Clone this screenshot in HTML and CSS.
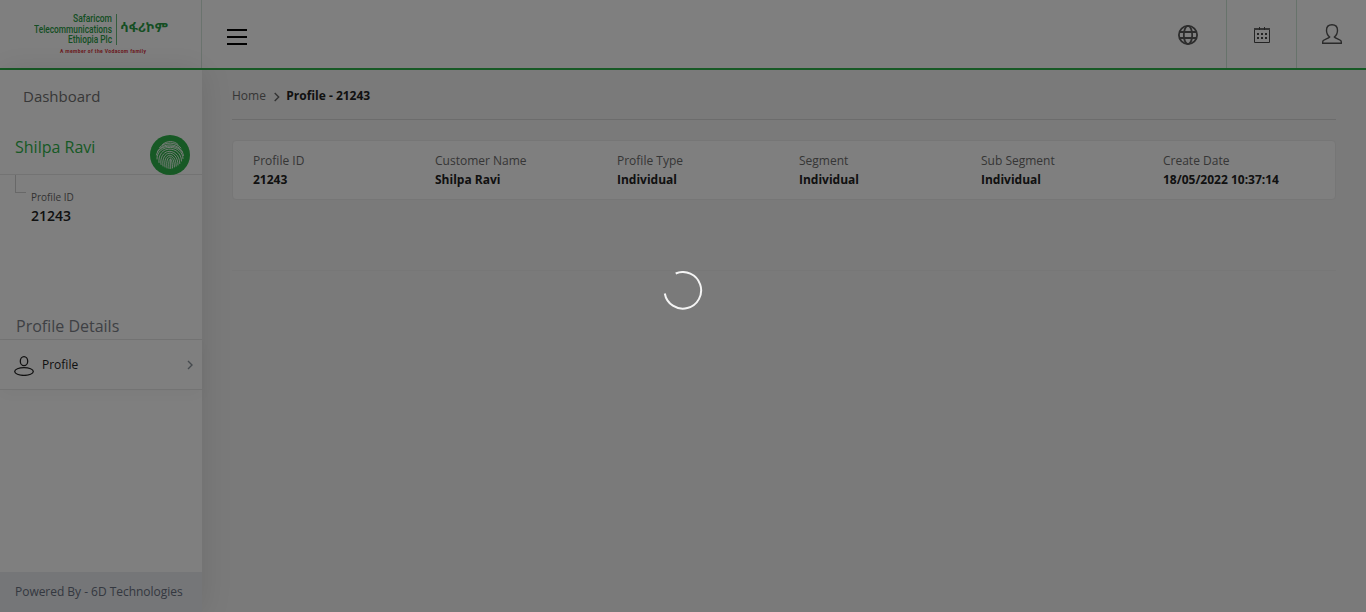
FILE: index.html
```html
<!DOCTYPE html>
<html lang="en">
<head>
<meta charset="utf-8">
<title>Profile - 21243</title>
<link rel="stylesheet" href="styles.css">
</head>
<body>
<header class="topbar">
  <div class="brand">
    <svg class="logo" width="140" height="46" viewBox="0 0 140 46">
      <g class="logo-name">
        <text x="39" y="13.200" textLength="39" lengthAdjust="spacingAndGlyphs">Safaricom</text>
        <text x="0" y="23.700" textLength="78" lengthAdjust="spacingAndGlyphs">Telecommunications</text>
        <text x="34" y="34.200" textLength="44" lengthAdjust="spacingAndGlyphs">Ethiopia Plc</text>
      </g>
      <text class="logo-amharic" x="86" y="22.500" textLength="48" lengthAdjust="spacingAndGlyphs">ሳፋሪኮም</text>
      <path class="logo-rule" d="M82.500 5v31"/>
      <text class="logo-tag" x="26" y="43.500" textLength="86" lengthAdjust="spacing">A member of the Vodacom family</text>
    </svg>
  </div>
  <div class="menu-toggle"><i></i><i></i><i></i></div>
  <nav class="tools">
    <div class="tool tool-globe">
      <svg width="20" height="20" viewBox="0 0 20 20" fill="none" stroke="#585858" stroke-width="1.800">
        <circle cx="10" cy="10" r="9.100"/><ellipse cx="10" cy="10" rx="4.200" ry="9.100"/><path d="M1.500 7h17M1.500 13h17"/>
      </svg>
    </div>
    <div class="tool">
      <svg width="16" height="16" viewBox="0 0 16 16" fill="none" stroke="#484848">
        <path d="M.5 2v13.500h15V2" /><path stroke="#6a6a6a" stroke-width="2" d="M0 2h16"/><path d="M5.500 0v3M10.500 0v3"/>
        <path stroke-width="2" stroke-dasharray="2 2" d="M3 7h10M3 11h10"/>
      </svg>
    </div>
    <div class="tool">
      <svg width="20" height="20" viewBox="0 0 20 20" fill="none" stroke="#555" stroke-width="1.400" stroke-linejoin="round">
        <path d="M7.700 13C5.500 11.300 4.500 8.700 4.500 6.200 4.500 2.700 6.500.7 10 .7s5.500 2 5.500 5.500c0 2.500-1 5.100-3.200 6.800 1.500 1.500 5.500 2.200 6.600 3.700.4.800.5 1.600.5 2.600H.6c0-1 .1-1.800.5-2.600C2.200 15.200 6.200 14.500 7.700 13z"/>
      </svg>
    </div>
  </nav>
</header>
<div class="layout">
  <aside class="sidebar">
    <div class="dashboard">Dashboard</div>
    <div class="customer">
      <span>Shilpa Ravi</span>
      <svg class="finger" width="40" height="40" viewBox="0 0 40 40" fill="none">
        <circle cx="20" cy="20" r="20" fill="#2fb34a"/>
        <g stroke="#fff" stroke-width=".9" stroke-linecap="round">
          <path d="M12.500 9.500C17 5.500 24 5.500 28 9.500M9.500 12.500C15 6.500 25.500 6.500 31 13M7.500 16.500C12 7.500 28 7.500 32.500 17M6.500 20C8 8 31.500 8 33.500 20.500"/>
          <path d="M7 24C6.500 8.500 32.500 8.500 33 23.500M9 27.500C7 9.500 31.500 10 31.500 26M11 29.500C8.500 12 29.500 12 29.800 28.500"/>
          <path d="M13 31C10.500 14 28 14 28 30M15 32C12.500 16.500 26.300 16.500 26.200 31.200M17 33C14.800 18.500 24.500 18.500 24.400 32M19 33.500C17.500 21 22.700 21 22.500 33M20.700 24v9.500"/>
        </g>
      </svg>
    </div>
    <div class="profile-id">
      <div class="branch"></div>
      <div><div class="id-label">Profile ID</div><div class="id-value">21243</div></div>
    </div>
    <div class="section-title">Profile Details</div>
    <div class="side-item">
      <svg width="20" height="20" viewBox="0 0 20 20" fill="none" stroke="#222" stroke-width="1.300"><ellipse cx="10" cy="5.200" rx="3.700" ry="4.500"/><ellipse cx="10" cy="15.500" rx="9.300" ry="3.900"/></svg>
      <span>Profile</span>
      <svg width="7" height="10" viewBox="0 0 7 10" fill="none" stroke="#8a949c" stroke-width="1.400"><path d="M1 1l4 4-4 4"/></svg>
    </div>
    <footer class="powered">Powered By - 6D Technologies</footer>
  </aside>
  <main class="content">
    <div class="crumbs">
      <span>Home</span>
      <svg width="6" height="10" viewBox="0 0 6 10" fill="none" stroke="#666" stroke-width="1.400"><path d="M.7 1l4 4-4 4"/></svg>
      <b>Profile - 21243</b>
    </div>
    <section class="card">
      <dl><dt>Profile ID</dt><dd>21243</dd></dl>
      <dl><dt>Customer Name</dt><dd>Shilpa Ravi</dd></dl>
      <dl><dt>Profile Type</dt><dd>Individual</dd></dl>
      <dl><dt>Segment</dt><dd>Individual</dd></dl>
      <dl><dt>Sub Segment</dt><dd>Individual</dd></dl>
      <dl><dt>Create Date</dt><dd>18/05/2022 10:37:14</dd></dl>
    </section>
    <div class="divider"></div>
  </main>
</div>
<div class="overlay">
  <svg width="40" height="40" viewBox="0 0 40 40" fill="none" stroke="#f4f4f4" stroke-width="2"><path d="M12.700 2.500A18.300 18.300 0 1 1 1.800 22.500"/></svg>
</div>
</body>
</html>
```
FILE: styles.css
```css
* { box-sizing: border-box; }
body {
  margin: 0;
  height: 612px;
  overflow: hidden;
  display: flex;
  flex-direction: column;
  background: #f4f4f4;
  font: 12px/18px "Open Sans", "Noto Sans", sans-serif;
  color: #222;
}
svg { display: block; flex: none; }
.topbar {
  display: flex;
  height: 70px;
  flex: none;
  background: #fff;
  border-bottom: 2px solid #2fb34a;
}
.brand {
  width: 202px;
  padding: 9px 0 0 34px;
  border-right: 1px solid #d5e6dc;
}
.logo-name { font: 500 11px Roboto, sans-serif; fill: #2a9d46; }
.logo-amharic { font: 700 13px "Noto Sans Ethiopic", "Noto Sans", sans-serif; fill: #2a9d46; }
.logo-rule { stroke: #2a9d46; stroke-width: 1; opacity: .7; }
.logo-tag { font: 700 5px Roboto, sans-serif; fill: #d8323c; }
.menu-toggle {
  display: flex;
  flex-direction: column;
  gap: 5px;
  padding: 29px 0 0 25px;
}
.menu-toggle i { width: 20px; height: 2px; background: #000; }
.tools { display: flex; margin-left: auto; }
.tool {
  width: 70px;
  display: flex;
  justify-content: center;
  align-items: center;
  border-left: 1px solid #cfe6d6;
}
.tool-globe { width: 76px; border-left: 0; padding-top: 2px; }
.tool:nth-child(2) { padding-top: 2px; }
.layout { display: flex; flex: 1; min-height: 0; }
.sidebar {
  width: 202px;
  display: flex;
  flex-direction: column;
  background: #fff;
  box-shadow: 0 0 30px rgba(0, 0, 0, .1);
}
.dashboard { height: 38px; padding: 15px 0 0 23px; font-size: 15px; line-height: 22px; color: #707070; }
.customer {
  display: flex;
  justify-content: space-between;
  height: 67px;
  padding: 27px 12px 0 15px;
  border-bottom: 1px solid #e6e6e6;
  font-size: 16px;
  line-height: 24px;
  color: #2fb34a;
}
.profile-id { display: flex; height: 141px; padding-left: 15px; }
.branch {
  width: 11px;
  height: 18px;
  margin-right: 5px;
  border-left: 1px solid #d0d0d0;
  border-bottom: 1px solid #d0d0d0;
}
.id-label { margin-top: 13px; font-size: 10px; color: #666; }
.id-value { font-size: 14px; line-height: 20px; font-weight: 600; }
.section-title {
  height: 24px;
  padding-left: 16px;
  border-bottom: 1px solid #e6e6e6;
  font-size: 16px;
  line-height: 20px;
  color: #7d8189;
}
.side-item {
  display: flex;
  align-items: center;
  gap: 8px;
  height: 50px;
  padding: 1px 8px 0 14px;
  border-bottom: 1px solid #e6e6e6;
  box-shadow: 0 6px 14px rgba(0, 0, 0, .03);
}
.side-item svg:first-child { margin-top: 2px; }
.side-item svg:last-child { margin-top: -1px; }
.side-item span { flex: 1; }
.powered {
  margin-top: auto;
  height: 40px;
  padding-left: 15px;
  background: #eaecf0;
  line-height: 40px;
  color: #687080;
  letter-spacing: -.03px;
}
.content { flex: 1; padding: 0 30px; }
.crumbs {
  display: flex;
  align-items: center;
  gap: 7px;
  height: 50px;
  padding-top: 2px;
  border-bottom: 1px solid #d9d9d9;
  color: #6c6c6c;
}
.crumbs svg { margin: 2px 0 0 1px; }
.crumbs b { color: #222; margin-left: -.6px; }
.card {
  display: grid;
  grid-template-columns: repeat(6, 182px);
  width: 1104px;
  height: 60px;
  margin-top: 20px;
  padding: 11px 0 0 20px;
  background: #fff;
  border: 1px solid #ececec;
  border-radius: 4px;
}
dl, dd { margin: 0; }
dt { color: #6c6c6c; }
dd { font-weight: 700; line-height: 20px; }
.divider { height: 71px; border-bottom: 1px solid #eee; }
.overlay {
  position: fixed;
  inset: 0;
  display: flex;
  justify-content: center;
  padding-top: 271px;
  background: rgba(0, 0, 0, .5);
}
```
